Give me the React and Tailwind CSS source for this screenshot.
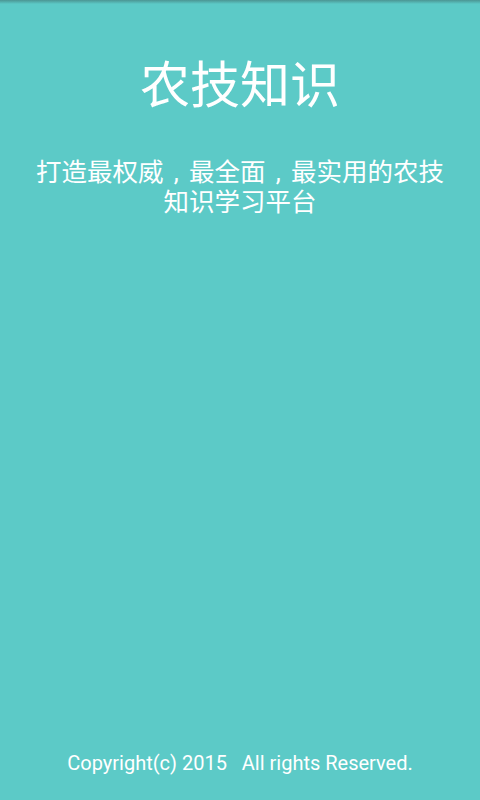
import React from 'react'

// 启动页：农技知识
function Comma() {
  return (
    <span className="inline-block w-[1em] text-center">,</span>
  )
}

function App() {
  return (
    <div className="relative flex flex-col items-center w-[480px] h-[800px] bg-[#5ccac7] text-white font-['Roboto','Noto_Sans_CJK_SC',sans-serif]">
      {/* 顶部阴影 */}
      <div className="absolute top-0 left-0 right-0 h-[4px] bg-gradient-to-b from-[#4b9593] to-[#5ccac7]" />

      <h1 className="mt-[61px] text-[50px] leading-none font-normal">农技知识</h1>

      <div className="mt-[46px] flex flex-col items-center text-[25.5px] leading-[30px]">
        <p className="whitespace-nowrap">
          打造最权威<Comma />最全面<Comma />最实用的农技
        </p>
        <p>知识学习平台</p>
      </div>

      <p className="mt-auto mb-[25px] text-[20px] leading-[24px] whitespace-pre">
        Copyright(c) 2015   All rights Reserved.
      </p>
    </div>
  )
}

export default App
